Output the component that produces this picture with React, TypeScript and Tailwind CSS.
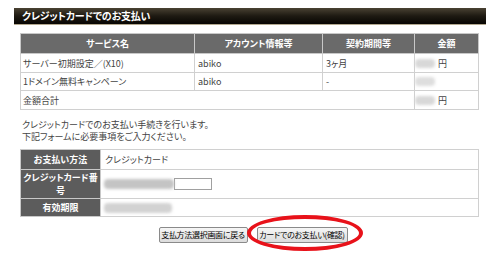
import React from "react";

const Blur = ({ w, h = 9, c = "bg-[#c8c8c8]" }: { w: number; h?: number; c?: string }) => (
  <span
    className={`inline-block align-middle ${c} blur-[1.5px] rounded-sm`}
    style={{ width: w, height: h }}
  />
);

export default function App() {
  return (
    <div
      className="relative w-[498px] h-[254px] bg-white text-[#444] [font-feature-settings:'palt'] overflow-hidden"
      style={{ fontFamily: '"Noto Sans CJK JP", "Noto Sans", sans-serif' }}
    >
      <div className="ml-[14px] mt-[8px] w-[472px] h-[17px] flex items-center pl-[8px] bg-gradient-to-b from-[#4a4233] via-[#1e1a12] to-[#080604] border-b border-[#b3a88f]">
        <span className="text-white text-[10px] font-bold leading-none tracking-[-0.2px]">
          クレジットカードでのお支払い
        </span>
      </div>

      <table className="ml-[20px] mt-[8px] w-[459px] border-collapse text-[9px] leading-none font-normal">
        <thead>
          <tr className="h-[20px] bg-[#6a6a6a] text-white">
            <th className="w-[174px] border border-[#c8c8c8] font-bold">サービス名</th>
            <th className="w-[128px] border border-[#c8c8c8] font-bold">アカウント情報等</th>
            <th className="w-[92px] border border-[#c8c8c8] font-bold">契約期間等</th>
            <th className="border border-[#c8c8c8] font-bold">金額</th>
          </tr>
        </thead>
        <tbody>
          <tr className="h-[19px]">
            <td className="border border-[#d0d0d0] pl-[2px]">サーバー初期設定／(X10)</td>
            <td className="border border-[#d0d0d0] pl-[3px]">abiko</td>
            <td className="border border-[#d0d0d0] pl-[3px]">3ヶ月</td>
            <td className="border border-[#d0d0d0]">
              <div className="flex items-center gap-[3px]">
                <Blur w={20} c="bg-[#d8d8d8]" />
                <span>円</span>
              </div>
            </td>
          </tr>
          <tr className="h-[18px]">
            <td className="border border-[#d0d0d0] pl-[2px]">1ドメイン無料キャンペーン</td>
            <td className="border border-[#d0d0d0] pl-[3px]">abiko</td>
            <td className="border border-[#d0d0d0] pl-[3px]">-</td>
            <td className="border border-[#d0d0d0]">
              <div className="flex items-center">
                <Blur w={20} c="bg-[#dedede]" />
              </div>
            </td>
          </tr>
          <tr className="h-[19px]">
            <td colSpan={3} className="border border-[#d0d0d0] pl-[2px]">金額合計</td>
            <td className="border border-[#d0d0d0]">
              <div className="flex items-center gap-[3px]">
                <Blur w={20} c="bg-[#d8d8d8]" />
                <span>円</span>
              </div>
            </td>
          </tr>
        </tbody>
      </table>

      <div className="ml-[22px] mt-[9px] text-[9px] leading-[12px]">
        <p>クレジットカードでのお支払い手続きを行います。</p>
        <p>下記フォームに必要事項をご入力ください。</p>
      </div>

      <table className="ml-[20px] mt-[6px] w-[459px] border-collapse text-[9px] leading-none">
        <tbody>
          <tr className="h-[20px]">
            <th className="w-[80px] bg-[#5c5c5c] text-white font-bold border border-[#c8c8c8]">お支払い方法</th>
            <td className="border border-[#d0d0d0] pl-[4px]">クレジットカード</td>
          </tr>
          <tr className="h-[29px]">
            <th className="bg-[#5c5c5c] text-white font-bold border border-[#c8c8c8] leading-[13px]">
              <div>クレジットカード番</div>
              <div>号</div>
            </th>
            <td className="border border-[#d0d0d0] pl-[3px]">
              <div className="flex items-center">
                <Blur w={70} h={10} c="bg-[#c4c4c4]" />
                <div className="w-[38px] h-[12px] border border-[#a0a0a0] bg-white" />
              </div>
            </td>
          </tr>
          <tr className="h-[18px]">
            <th className="bg-[#5c5c5c] text-white font-bold border border-[#c8c8c8]">有効期限</th>
            <td className="border border-[#d0d0d0] pl-[3px]">
              <Blur w={68} h={10} c="bg-[#d2d2d2]" />
            </td>
          </tr>
        </tbody>
      </table>

      <div className="mt-[10px] flex justify-center gap-[9px] pl-[8px]">
        <button className="h-[16px] w-[89px] whitespace-nowrap border border-[#8a8a8a] rounded-[2px] bg-gradient-to-b from-[#f6f6f6] to-[#dcdcdc] text-[8px] leading-none text-black tracking-[-0.3px]">
          支払方法選択画面に戻る
        </button>
        <button className="h-[16px] w-[91px] whitespace-nowrap border border-[#8a8a8a] rounded-[2px] bg-gradient-to-b from-[#f6f6f6] to-[#dcdcdc] text-[8px] leading-none text-black tracking-[-0.3px]">
          カードでのお支払い(確認)
        </button>
      </div>

      <div className="absolute left-[247px] top-[215px] w-[116px] h-[36px] rounded-[50%] border-[4px] border-[#e8121a]" />
    </div>
  );
}
